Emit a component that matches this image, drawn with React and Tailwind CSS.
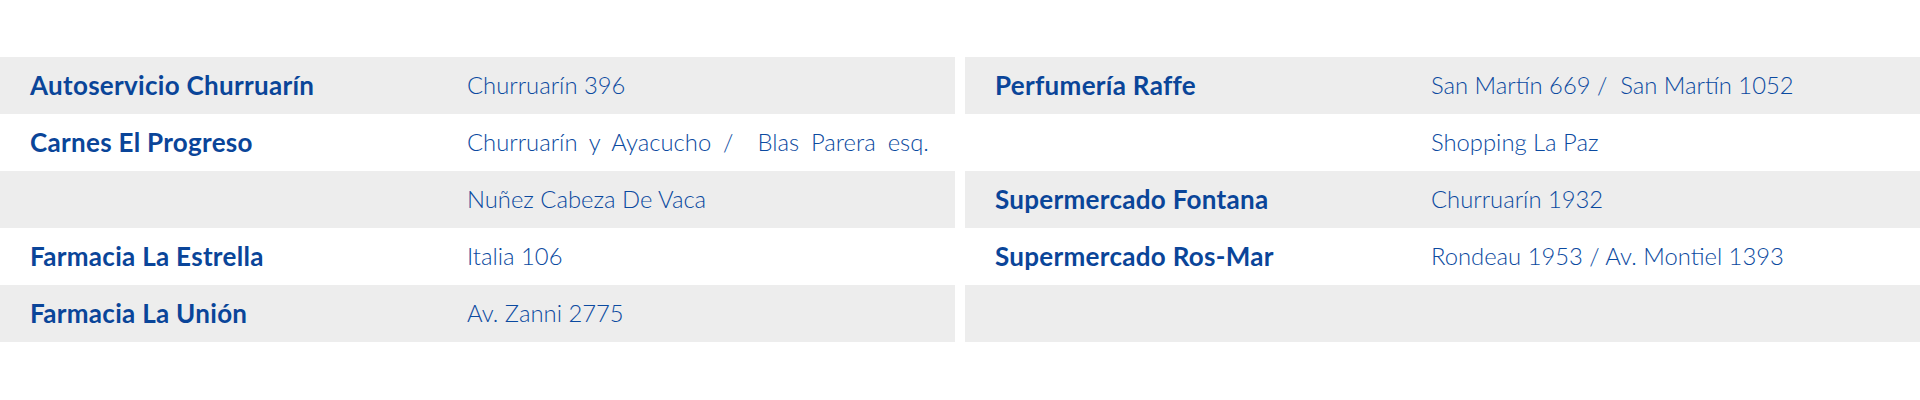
import React from 'react';

const left = [
  { name: 'Autoservicio Churruarín', addr: 'Churruarín 396' },
  { name: 'Carnes El Progreso', addr: 'Churruarín y Ayacucho /  Blas Parera esq.', wide: true },
  { name: '', addr: 'Nuñez Cabeza De Vaca' },
  { name: 'Farmacia La Estrella', addr: 'Italia 106' },
  { name: 'Farmacia La Unión', addr: 'Av. Zanni 2775' },
];

const right = [
  { name: 'Perfumería Raffe', addr: 'San Martín 669 /  San Martín 1052' },
  { name: '', addr: 'Shopping La Paz' },
  { name: 'Supermercado Fontana', addr: 'Churruarín 1932' },
  { name: 'Supermercado Ros-Mar', addr: 'Rondeau 1953 / Av. Montiel 1393' },
  { name: '', addr: '' },
];

const Table = ({ rows, nameWidth }) => (
  <div className="flex-1 flex flex-col">
    {rows.map((row, i) => (
      <div
        key={i}
        className={`h-[57px] flex items-center ${i % 2 === 0 ? 'bg-[#ededed]' : 'bg-white'}`}
      >
        <div className={`${nameWidth} shrink-0 pl-[30px] font-bold text-[#0a4599] text-[26px] tracking-[0.3px]`}>
          {row.name}
        </div>
        <div
          className={`font-light text-[#0b4aa0] text-[23.8px] whitespace-pre ${row.wide ? '[word-spacing:5.5px]' : ''}`}
        >
          {row.addr}
        </div>
      </div>
    ))}
  </div>
);

export default function App() {
  return (
    <div className="w-[1920px] h-[400px] bg-white pt-[57px] font-['Lato',sans-serif]">
      <div className="flex gap-[10px]">
        <Table rows={left} nameWidth="w-[467px]" />
        <Table rows={right} nameWidth="w-[466px]" />
      </div>
    </div>
  );
}
